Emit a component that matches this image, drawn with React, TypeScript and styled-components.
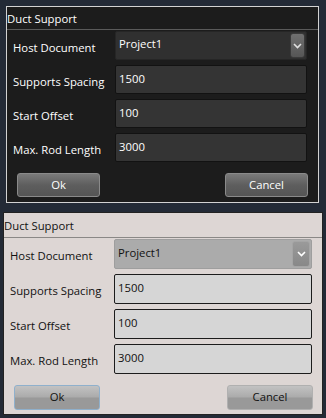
import React from 'react'
import styled, { createGlobalStyle, css } from 'styled-components'

type Mode = 'dark' | 'light'

const GlobalStyle = createGlobalStyle`
  html, body {
    margin: 0;
    padding: 0;
    background-color: #232a36;
  }
  body {
    font-family: "Open Sans", "Noto Sans", sans-serif;
    font-size: 11.3px;
  }
`

const Page = styled.div`
  width: 326px;
  height: 418px;
  display: flex;
  flex-direction: column;
  box-sizing: border-box;
  padding-top: 6px;
  gap: 9px;
`

const Dialog = styled.div<{ $mode: Mode }>`
  box-sizing: border-box;
  display: flex;
  flex-direction: column;
  ${(p) =>
    p.$mode === 'dark'
      ? css`
          margin-left: 6px;
          width: 313px;
          height: 197px;
          background-color: #1c1c1c;
          border: 1px solid #d2d2d2;
          color: #ffffff;
        `
      : css`
          margin-left: 3px;
          width: 320px;
          height: 203px;
          background-color: #ddd6d4;
          border: 1px solid #222222;
          color: #111111;
        `}
`

const TitleBar = styled.div<{ $mode: Mode }>`
  height: ${(p) => (p.$mode === 'dark' ? '22px' : '24px')};
  display: flex;
  align-items: center;
  font-size: 11.3px;
  border-bottom: 1px solid ${(p) => (p.$mode === 'dark' ? '#5a5a5a' : '#8a8886')};
`

const Body = styled.div<{ $mode: Mode }>`
  display: grid;
  grid-template-columns: ${(p) => (p.$mode === 'dark' ? '102px 192px' : '104px 198px')};
  grid-auto-rows: ${(p) => (p.$mode === 'dark' ? '29px' : '30px')};
  row-gap: 5px;
  padding: 1px 0 0 6px;
  align-items: stretch;
`

const Label = styled.div`
  display: flex;
  align-items: center;
  padding-top: 3px;
  font-size: 11.3px;
  white-space: nowrap;
`

const Field = styled.div<{ $mode: Mode }>`
  box-sizing: border-box;
  display: flex;
  align-items: center;
  padding-left: 3px;
  padding-bottom: 3px;
  font-size: 11.3px;
  border-radius: 2px;
  ${(p) =>
    p.$mode === 'dark'
      ? css`
          background-color: #343434;
          border: 1px solid #121212;
          color: #ffffff;
        `
      : css`
          background-color: #d6d6d6;
          border: 1px solid #1c1c1c;
          color: #111111;
        `}
`

const Combo = styled(Field)`
  justify-content: space-between;
  padding-right: 1px;
  padding-bottom: 0;
  ${(p) =>
    p.$mode === 'dark'
      ? css`
          background-color: #303030;
          border-color: #262626;
        `
      : css`
          background-color: #ababab;
          border-color: #9e9e9e;
        `}
  & > span {
    padding-bottom: 4px;
  }
`

const DropButton = styled.div<{ $mode: Mode }>`
  box-sizing: border-box;
  align-self: stretch;
  margin: 1px 0;
  width: ${(p) => (p.$mode === 'dark' ? '15px' : '18px')};
  border-radius: 3px;
  display: flex;
  align-items: center;
  justify-content: center;
  ${(p) =>
    p.$mode === 'dark'
      ? css`
          background: linear-gradient(#707070, #565656);
          border: 1px solid #3a3a3a;
        `
      : css`
          background: linear-gradient(#9a9a9a, #888888);
          border: 1px solid #a5a5a5;
        `}
`

const Buttons = styled.div<{ $mode: Mode }>`
  margin-top: auto;
  display: flex;
  justify-content: space-between;
  ${(p) =>
    p.$mode === 'dark'
      ? css`
          padding: 0 10px 5px 10px;
        `
      : css`
          padding: 0 9px 4px 10px;
        `}
`

const Button = styled.button<{ $mode: Mode; $focus?: boolean }>`
  box-sizing: border-box;
  font-family: "Open Sans", "Noto Sans", sans-serif;
  font-size: 11.3px;
  border-radius: 3px;
  padding: 0 0 2px 0;
  ${(p) =>
    p.$mode === 'dark'
      ? css`
          width: 83px;
          height: 24px;
          color: #ffffff;
          background: linear-gradient(#7a7a7a, #5e5e5e 50%, #555555);
          border: 1px solid #8a8a8a;
        `
      : css`
          width: 86px;
          height: 25px;
          color: #111111;
          background: linear-gradient(#c2c2c2, #ababab 48%, #999999 52%, #999999);
          border: 1px solid ${p.$focus ? '#8fb0cc' : '#b0b0b0'};
        `}
`

const Chevron = ({ color }: { color: string }) => (
  <svg width="9" height="6" viewBox="0 0 9 6">
    <path d="M1 1 L4.5 4.5 L8 1" fill="none" stroke={color} strokeWidth="1.6" />
  </svg>
)

const rows = [
  { label: 'Supports Spacing', value: '1500' },
  { label: 'Start Offset', value: '100' },
  { label: 'Max. Rod Length', value: '3000' },
]

const DuctSupport = ({ mode }: { mode: Mode }) => (
  <Dialog $mode={mode}>
    <TitleBar $mode={mode}>Duct Support</TitleBar>
    <Body $mode={mode}>
      <Label>Host Document</Label>
      <Combo $mode={mode}>
        <span>Project1</span>
        <DropButton $mode={mode}>
          <Chevron color={mode === 'dark' ? '#e0e0e0' : '#ffffff'} />
        </DropButton>
      </Combo>
      {rows.map((r) => (
        <React.Fragment key={r.label}>
          <Label>{r.label}</Label>
          <Field $mode={mode}>{r.value}</Field>
        </React.Fragment>
      ))}
    </Body>
    <Buttons $mode={mode}>
      <Button $mode={mode} $focus>Ok</Button>
      <Button $mode={mode}>Cancel</Button>
    </Buttons>
  </Dialog>
)

export default function App() {
  return (
    <>
      <GlobalStyle />
      <Page>
        <DuctSupport mode="dark" />
        <DuctSupport mode="light" />
      </Page>
    </>
  )
}
